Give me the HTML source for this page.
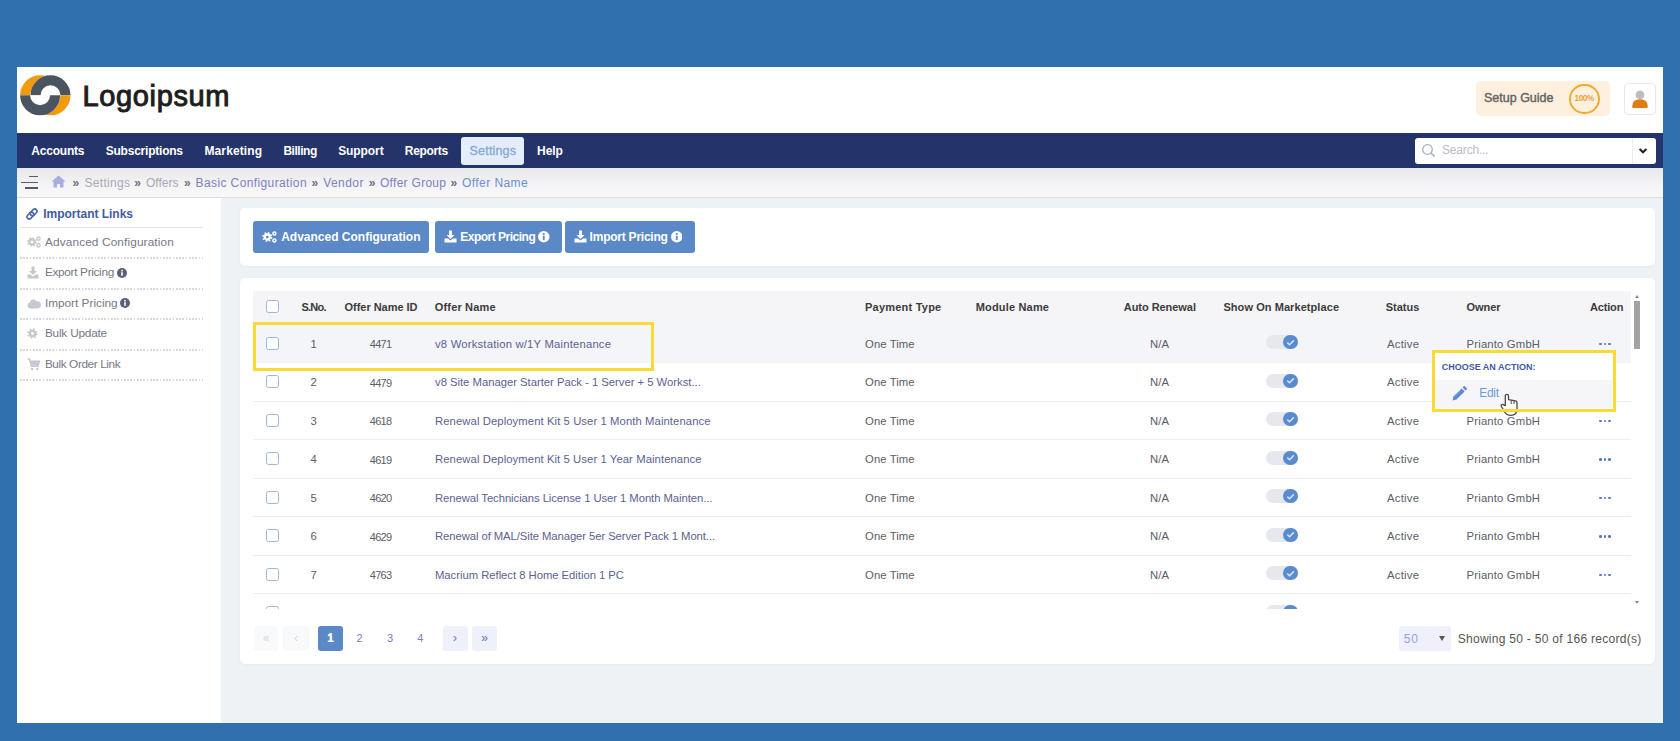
<!DOCTYPE html>
<html><head><meta charset="utf-8">
<style>
*{box-sizing:border-box;margin:0;padding:0}
html,body{width:1680px;height:741px;overflow:hidden;background:#3170ae;font-family:"Liberation Sans",sans-serif}
.a{position:absolute;white-space:nowrap}
.nv{position:absolute;top:133px;height:35px;line-height:35px;color:#fff;font-size:11.8px;font-weight:bold;white-space:nowrap}
.bt{position:absolute;top:213px;height:29px;line-height:29px;font-size:12.7px;white-space:nowrap;color:#a8a9b4}
.sl{position:absolute;left:45px;font-size:11.5px;color:#8a8c98;white-space:nowrap;line-height:14px}
.sd{position:absolute;left:20px;width:183px;height:2px;background:repeating-linear-gradient(90deg,#d9dadf 0 1.6px,transparent 1.6px 3.25px)}
.btn{position:absolute;top:221px;height:32px;background:#5b88c6;border-radius:3px;color:#fff;font-size:12px;font-weight:bold;line-height:32px;white-space:nowrap}
.th{position:absolute;top:300px;line-height:14px;font-size:11px;font-weight:bold;color:#3b3b3b;white-space:nowrap}
.cb{position:absolute;width:13px;height:13px;border:1.5px solid #9db5e0;border-radius:2.5px;background:#fff}
.td{position:absolute;font-size:11.4px;color:#585858;line-height:14px;white-space:nowrap}
.c{text-align:center}
.on{color:#5c6290;font-size:11.5px}
.tg{position:absolute;width:32px;height:14px;border-radius:7px;background:#e6e8ee}
.kn{position:absolute;left:17.3px;top:-0.3px;width:14.5px;height:14.5px;border-radius:50%;background:#5a8bd0}
.dots{position:absolute;height:3px;width:14px}
.dots i{position:absolute;top:0.2px;width:2.7px;height:2.7px;border-radius:50%;background:#5778c8}
.dots i:nth-child(1){left:0px}.dots i:nth-child(2){left:4.6px}.dots i:nth-child(3){left:9.2px}
.pg{position:absolute;top:626px;width:25px;height:25px;border-radius:3px;text-align:center;line-height:25px;font-size:12px;color:#7a80c0}
.t{position:absolute;white-space:nowrap;line-height:1;font-family:"Liberation Sans",sans-serif}
.ck{position:absolute;left:17px;top:-0.5px}

</style></head><body>
<!-- app panel -->
<div class="a" style="left:17px;top:67px;width:1646px;height:656px;background:#eff2f5"></div>
<!-- header -->
<div class="a" style="left:17px;top:67px;width:1646px;height:66px;background:#fff"></div>
<svg class="a" style="left:17px;top:67px" width="60" height="55" viewBox="0 0 60 55">
  <path d="M8.1 28.3 A15 15 0 0 1 38.1 28.3" stroke="#f29a0e" stroke-width="10" fill="none"/>
  <path d="M13.5 28.3 A20 20 0 0 1 53.5 28.3 Z" fill="#fff"/>
  <path d="M18.5 28.3 A15 15 0 0 1 48.5 28.3" stroke="#4a5561" stroke-width="10" fill="none"/>
  <path d="M18.5 28.3 A15 15 0 0 0 48.5 28.3" stroke="#f29a0e" stroke-width="10" fill="none"/>
  <path d="M3.1 28.3 A20 20 0 0 0 43.1 28.3 Z" fill="#fff"/>
  <path d="M8.1 28.3 A15 15 0 0 0 38.1 28.3" stroke="#4a5561" stroke-width="10" fill="none"/>
</svg>
<div class="a" style="left:1476px;top:81px;width:134px;height:35px;background:#fdf0de;border-radius:5px"></div>
<div class="a" style="left:1569px;top:83.5px;width:30.5px;height:30.5px;border:2.6px solid #f1ab2e;border-radius:50%;font-size:8.3px;font-weight:bold;color:#e9a444;text-align:center;line-height:25.5px;letter-spacing:-0.4px">100%</div>
<div class="a" style="left:1624px;top:83px;width:32px;height:32px;border:1px solid #e8e8ea;border-radius:4px;background:#fff"></div>
<svg class="a" style="left:1624px;top:83px" width="32" height="32" viewBox="0 0 32 32">
  <path d="M8.2 23.5 Q8.2 16.2 16 16.2 Q23.8 16.2 23.8 23.5 Q23.8 25 22.3 25 L9.7 25 Q8.2 25 8.2 23.5 Z" fill="#e07c12"/>
  <circle cx="16" cy="12" r="4.4" fill="#bdbdbd"/>
</svg>
<!-- nav -->
<div class="a" style="left:17px;top:133px;width:1646px;height:35px;background:#24336a"></div>
<div class="a" style="left:461px;top:137px;width:63px;height:28px;background:#e4eefa;border-radius:3px"></div>
<div class="a" style="left:1415px;top:138px;width:241px;height:25.5px;background:#fff;border-radius:3px"></div>
<div class="a" style="left:1631.5px;top:138px;width:1px;height:25.5px;background:#ededed"></div>
<svg class="a" style="left:1421px;top:143px" width="16" height="16" viewBox="0 0 16 16">
  <circle cx="6.5" cy="6.5" r="4.8" stroke="#a9b0c6" stroke-width="1.3" fill="none"/>
  <path d="M10 10 L13.6 13.6" stroke="#a9b0c6" stroke-width="1.5"/>
</svg>
<svg class="a" style="left:1637px;top:146px" width="12" height="10" viewBox="0 0 12 10">
  <path d="M2.6 3 L6 6.2 L9.4 3" stroke="#222" stroke-width="2.1" fill="none"/>
</svg>
<!-- breadcrumb -->
<div class="a" style="left:17px;top:168px;width:1646px;height:30px;background:linear-gradient(#e8e8eb,#f3f3f5 55%,#f9f9fa);border-bottom:1.5px solid #dcdde1"></div>
<div class="a" style="left:28.5px;top:175.6px;width:9.5px;height:1.8px;background:#5c5c5c"></div>
<div class="a" style="left:20.5px;top:181.6px;width:17.5px;height:1.8px;background:#5c5c5c"></div>
<div class="a" style="left:25px;top:187.1px;width:13px;height:1.8px;background:#5c5c5c"></div>
<svg class="a" style="left:51px;top:175px" width="15" height="13" viewBox="0 0 15 13">
  <path d="M7.5 0.5 L0.5 6.5 L2.5 6.5 L2.5 12.5 L6 12.5 L6 9 L9 9 L9 12.5 L12.5 12.5 L12.5 6.5 L14.5 6.5 Z" fill="#a6addf"/>
</svg>
<!-- sidebar -->
<div class="a" style="left:17px;top:198px;width:204px;height:525px;background:#fff"></div>
<svg class="a" style="left:25px;top:207px" width="14" height="14" viewBox="0 0 14 14">
  <g transform="rotate(-45 7 7)" fill="none" stroke="#4a66b3" stroke-width="1.6">
   <rect x="0.9" y="4.8" width="7.6" height="4.4" rx="2.2"/>
   <rect x="5.5" y="4.8" width="7.6" height="4.4" rx="2.2"/>
  </g>
</svg>
<div class="a" style="left:20px;top:226.5px;width:183px;height:1px;background:#e4e5ea"></div>
<div class="sd" style="top:257px"></div>
<div class="sd" style="top:287.5px"></div>
<div class="sd" style="top:318px"></div>
<div class="sd" style="top:348.5px"></div>
<div class="sd" style="top:379px"></div>
<!-- toolbar card -->
<div class="a" style="left:240px;top:208px;width:1415px;height:58px;background:#fff;border-radius:5px;box-shadow:0 1px 3px rgba(60,70,90,0.05)"></div>
<div class="btn" style="left:253px;width:176px"></div>
<div class="btn" style="left:435px;width:127px"></div>
<div class="btn" style="left:565px;width:130px"></div>

<!-- sidebar icons -->
<svg class="a" style="left:27px;top:236px" width="15" height="12" viewBox="0 0 15 12">
  <g fill="none" stroke="#c6c8d1">
   <circle cx="5" cy="6" r="2.6" stroke-width="2.2"/>
   <circle cx="5" cy="6" r="4" stroke-width="1.6" stroke-dasharray="1.6 1.54"/>
   <circle cx="11.5" cy="2.6" r="1.6" stroke-width="1.4"/>
   <circle cx="11.5" cy="9.4" r="1.6" stroke-width="1.4"/>
  </g>
</svg>
<svg class="a" style="left:27px;top:266px" width="12" height="13" viewBox="0 0 12 13">
  <path d="M4.5 0.5 H7.5 V5 H10 L6 9 L2 5 H4.5 Z" fill="#c6c8d1"/>
  <path d="M0.5 8.5 H3.5 L6 10.5 L8.5 8.5 H11.5 V12.5 H0.5 Z" fill="#c6c8d1"/>
</svg>
<svg class="a" style="left:27px;top:298px" width="14" height="11" viewBox="0 0 14 11">
  <path d="M3.2 10.5 A3 3 0 0 1 2.8 4.6 A3.6 3.6 0 0 1 9.6 3.4 A3.2 3.2 0 0 1 10.8 10.5 Z" fill="#c6c8d1"/>
</svg>
<svg class="a" style="left:27px;top:328px" width="12" height="12" viewBox="0 0 12 12">
  <g fill="none" stroke="#c6c8d1">
   <circle cx="5.5" cy="5.5" r="2.6" stroke-width="2.4"/>
   <circle cx="5.5" cy="5.5" r="4.3" stroke-width="1.8" stroke-dasharray="1.7 1.68"/>
  </g>
</svg>
<svg class="a" style="left:27px;top:358px" width="13" height="13" viewBox="0 0 13 13">
  <path d="M0.5 1.2 H2.6 L4.4 8.2 H11 L12.2 3.2 H3.3" fill="none" stroke="#c6c8d1" stroke-width="1.6"/>
  <path d="M3.6 3.2 H12 L11 7.6 H4.6 Z" fill="#c6c8d1"/>
  <circle cx="5.2" cy="11" r="1.2" fill="#c6c8d1"/><circle cx="10.2" cy="11" r="1.2" fill="#c6c8d1"/>
</svg>
<svg class="a" style="left:117px;top:267.5px" width="10" height="10" viewBox="0 0 10 10"><circle cx="5" cy="5" r="5" fill="#5b6079"/><rect x="4.2" y="4.2" width="1.6" height="3.6" fill="#fff"/><circle cx="5" cy="2.7" r="0.9" fill="#fff"/></svg>
<svg class="a" style="left:120px;top:298px" width="10" height="10" viewBox="0 0 10 10"><circle cx="5" cy="5" r="5" fill="#5b6079"/><rect x="4.2" y="4.2" width="1.6" height="3.6" fill="#fff"/><circle cx="5" cy="2.7" r="0.9" fill="#fff"/></svg>
<!-- button icons -->
<svg class="a" style="left:262px;top:231px" width="16" height="12" viewBox="0 0 16 12">
  <g fill="none" stroke="#fff">
   <circle cx="5.3" cy="6" r="2.5" stroke-width="2.3"/>
   <circle cx="5.3" cy="6" r="4.1" stroke-width="1.8" stroke-dasharray="1.6 1.62"/>
   <circle cx="12.4" cy="2.4" r="1.5" stroke-width="1.5"/>
   <circle cx="12.4" cy="9.6" r="1.5" stroke-width="1.5"/>
  </g>
</svg>
<svg class="a" style="left:444px;top:230px" width="13" height="13" viewBox="0 0 13 13">
  <path d="M5 0.5 H8 V5 H10.5 L6.5 9 L2.5 5 H5 Z" fill="#fff"/>
  <path d="M0.5 8.5 H4 L6.5 10.5 L9 8.5 H12.5 V12.5 H0.5 Z" fill="#fff"/>
</svg>
<svg class="a" style="left:573.5px;top:230px" width="13" height="13" viewBox="0 0 13 13">
  <path d="M5 0.5 H8 V5 H10.5 L6.5 9 L2.5 5 H5 Z" fill="#fff"/>
  <path d="M0.5 8.5 H4 L6.5 10.5 L9 8.5 H12.5 V12.5 H0.5 Z" fill="#fff"/>
</svg>
<svg class="a" style="left:538px;top:231px" width="11.5" height="11.5" viewBox="0 0 10 10"><circle cx="5" cy="5" r="5" fill="#fff"/><rect x="4.2" y="4.2" width="1.6" height="3.6" fill="#5b88c6"/><circle cx="5" cy="2.7" r="0.9" fill="#5b88c6"/></svg>
<svg class="a" style="left:670.5px;top:231px" width="11.5" height="11.5" viewBox="0 0 10 10"><circle cx="5" cy="5" r="5" fill="#fff"/><rect x="4.2" y="4.2" width="1.6" height="3.6" fill="#5b88c6"/><circle cx="5" cy="2.7" r="0.9" fill="#5b88c6"/></svg>
<!-- table card -->
<div class="a" style="left:240px;top:278px;width:1415px;height:386px;background:#fff;border-radius:5px;box-shadow:0 1px 3px rgba(60,70,90,0.05)"></div>
<div class="a" style="left:253px;top:291px;width:1378px;height:33px;background:#f5f5f7"></div>
<div class="cb" style="left:266px;top:300px"></div>
<div class="a" style="left:253px;top:324px;width:1378px;height:285px;overflow:hidden">
<div class="a" style="left:-253px;top:-324px;width:1680px;height:741px">
<div class="a" style="left:253px;top:324.0px;width:1379px;height:38.5px;background:#f3f5f9"></div>
<div class="cb" style="left:266px;top:336.8px"></div>
<div class="tg" style="left:1266px;top:335.2px"><div class="kn"></div><svg class="ck" width="15" height="15" viewBox="0 0 15 15"><path d="M4.3 7.6 L6.5 9.7 L10.8 5.4" stroke="#d6e4f7" stroke-width="1.5" fill="none"/></svg></div>
<div class="dots" style="left:1599px;top:342.6px"><i></i><i></i><i></i></div>
<div class="cb" style="left:266px;top:375.2px"></div>
<div class="tg" style="left:1266px;top:373.8px"><div class="kn"></div><svg class="ck" width="15" height="15" viewBox="0 0 15 15"><path d="M4.3 7.6 L6.5 9.7 L10.8 5.4" stroke="#d6e4f7" stroke-width="1.5" fill="none"/></svg></div>
<div class="dots" style="left:1599px;top:381.1px"><i></i><i></i><i></i></div>
<div class="a" style="left:253px;top:400.5px;width:1379px;height:1px;background:#eeeef2"></div>
<div class="cb" style="left:266px;top:413.8px"></div>
<div class="tg" style="left:1266px;top:412.2px"><div class="kn"></div><svg class="ck" width="15" height="15" viewBox="0 0 15 15"><path d="M4.3 7.6 L6.5 9.7 L10.8 5.4" stroke="#d6e4f7" stroke-width="1.5" fill="none"/></svg></div>
<div class="dots" style="left:1599px;top:419.6px"><i></i><i></i><i></i></div>
<div class="a" style="left:253px;top:439.0px;width:1379px;height:1px;background:#eeeef2"></div>
<div class="cb" style="left:266px;top:452.2px"></div>
<div class="tg" style="left:1266px;top:450.8px"><div class="kn"></div><svg class="ck" width="15" height="15" viewBox="0 0 15 15"><path d="M4.3 7.6 L6.5 9.7 L10.8 5.4" stroke="#d6e4f7" stroke-width="1.5" fill="none"/></svg></div>
<div class="dots" style="left:1599px;top:458.1px"><i></i><i></i><i></i></div>
<div class="a" style="left:253px;top:477.5px;width:1379px;height:1px;background:#eeeef2"></div>
<div class="cb" style="left:266px;top:490.8px"></div>
<div class="tg" style="left:1266px;top:489.2px"><div class="kn"></div><svg class="ck" width="15" height="15" viewBox="0 0 15 15"><path d="M4.3 7.6 L6.5 9.7 L10.8 5.4" stroke="#d6e4f7" stroke-width="1.5" fill="none"/></svg></div>
<div class="dots" style="left:1599px;top:496.6px"><i></i><i></i><i></i></div>
<div class="a" style="left:253px;top:516.0px;width:1379px;height:1px;background:#eeeef2"></div>
<div class="cb" style="left:266px;top:529.2px"></div>
<div class="tg" style="left:1266px;top:527.8px"><div class="kn"></div><svg class="ck" width="15" height="15" viewBox="0 0 15 15"><path d="M4.3 7.6 L6.5 9.7 L10.8 5.4" stroke="#d6e4f7" stroke-width="1.5" fill="none"/></svg></div>
<div class="dots" style="left:1599px;top:535.0px"><i></i><i></i><i></i></div>
<div class="a" style="left:253px;top:554.5px;width:1379px;height:1px;background:#eeeef2"></div>
<div class="cb" style="left:266px;top:567.8px"></div>
<div class="tg" style="left:1266px;top:566.2px"><div class="kn"></div><svg class="ck" width="15" height="15" viewBox="0 0 15 15"><path d="M4.3 7.6 L6.5 9.7 L10.8 5.4" stroke="#d6e4f7" stroke-width="1.5" fill="none"/></svg></div>
<div class="dots" style="left:1599px;top:573.5px"><i></i><i></i><i></i></div>
<div class="a" style="left:253px;top:593.0px;width:1379px;height:1px;background:#eeeef2"></div>
<div class="cb" style="left:266px;top:606.2px"></div>
<div class="tg" style="left:1266px;top:604.8px"><div class="kn"></div><svg class="ck" width="15" height="15" viewBox="0 0 15 15"><path d="M4.3 7.6 L6.5 9.7 L10.8 5.4" stroke="#d6e4f7" stroke-width="1.5" fill="none"/></svg></div>
<div class="dots" style="left:1599px;top:612.0px"><i></i><i></i><i></i></div>
<div class="t" style="left:310.45px;top:338.95px;font-size:11.30px;color:#5c5d66">1</div>
<div class="t" style="left:369.85px;top:339.20px;font-size:11.00px;color:#5c5d66;letter-spacing:-0.728px">4471</div>
<div class="t" style="left:435.00px;top:338.95px;font-size:11.30px;color:#5c6290;letter-spacing:0.187px">v8 Workstation w/1Y Maintenance</div>
<div class="t" style="left:865.00px;top:338.95px;font-size:11.30px;color:#5c5d66;letter-spacing:0.088px">One Time</div>
<div class="t" style="left:1150.00px;top:338.95px;font-size:11.30px;color:#5c5d66;letter-spacing:0.078px">N/A</div>
<div class="t" style="left:1386.90px;top:338.95px;font-size:11.30px;color:#5c5d66;letter-spacing:0.287px">Active</div>
<div class="t" style="left:1466.60px;top:338.95px;font-size:11.30px;color:#5c5d66;letter-spacing:0.166px">Prianto GmbH</div>
<div class="t" style="left:310.45px;top:377.45px;font-size:11.30px;color:#5c5d66">2</div>
<div class="t" style="left:369.85px;top:377.70px;font-size:11.00px;color:#5c5d66;letter-spacing:-0.728px">4479</div>
<div class="t" style="left:435.00px;top:377.45px;font-size:11.30px;color:#5c6290;letter-spacing:-0.022px">v8 Site Manager Starter Pack - 1 Server + 5 Workst...</div>
<div class="t" style="left:865.00px;top:377.45px;font-size:11.30px;color:#5c5d66;letter-spacing:0.088px">One Time</div>
<div class="t" style="left:1150.00px;top:377.45px;font-size:11.30px;color:#5c5d66;letter-spacing:0.078px">N/A</div>
<div class="t" style="left:1386.90px;top:377.45px;font-size:11.30px;color:#5c5d66;letter-spacing:0.287px">Active</div>
<div class="t" style="left:1466.60px;top:377.45px;font-size:11.30px;color:#5c5d66;letter-spacing:0.166px">Prianto GmbH</div>
<div class="t" style="left:310.45px;top:415.95px;font-size:11.30px;color:#5c5d66">3</div>
<div class="t" style="left:369.85px;top:416.20px;font-size:11.00px;color:#5c5d66;letter-spacing:-0.728px">4618</div>
<div class="t" style="left:435.00px;top:415.95px;font-size:11.30px;color:#5c6290;letter-spacing:0.075px">Renewal Deployment Kit 5 User 1 Month Maintenance</div>
<div class="t" style="left:865.00px;top:415.95px;font-size:11.30px;color:#5c5d66;letter-spacing:0.088px">One Time</div>
<div class="t" style="left:1150.00px;top:415.95px;font-size:11.30px;color:#5c5d66;letter-spacing:0.078px">N/A</div>
<div class="t" style="left:1386.90px;top:415.95px;font-size:11.30px;color:#5c5d66;letter-spacing:0.287px">Active</div>
<div class="t" style="left:1466.60px;top:415.95px;font-size:11.30px;color:#5c5d66;letter-spacing:0.166px">Prianto GmbH</div>
<div class="t" style="left:310.45px;top:454.45px;font-size:11.30px;color:#5c5d66">4</div>
<div class="t" style="left:369.85px;top:454.70px;font-size:11.00px;color:#5c5d66;letter-spacing:-0.728px">4619</div>
<div class="t" style="left:435.00px;top:454.45px;font-size:11.30px;color:#5c6290;letter-spacing:0.074px">Renewal Deployment Kit 5 User 1 Year Maintenance</div>
<div class="t" style="left:865.00px;top:454.45px;font-size:11.30px;color:#5c5d66;letter-spacing:0.088px">One Time</div>
<div class="t" style="left:1150.00px;top:454.45px;font-size:11.30px;color:#5c5d66;letter-spacing:0.078px">N/A</div>
<div class="t" style="left:1386.90px;top:454.45px;font-size:11.30px;color:#5c5d66;letter-spacing:0.287px">Active</div>
<div class="t" style="left:1466.60px;top:454.45px;font-size:11.30px;color:#5c5d66;letter-spacing:0.166px">Prianto GmbH</div>
<div class="t" style="left:310.45px;top:492.95px;font-size:11.30px;color:#5c5d66">5</div>
<div class="t" style="left:369.85px;top:493.20px;font-size:11.00px;color:#5c5d66;letter-spacing:-0.728px">4620</div>
<div class="t" style="left:435.00px;top:492.95px;font-size:11.30px;color:#5c6290;letter-spacing:-0.071px">Renewal Technicians License 1 User 1 Month Mainten...</div>
<div class="t" style="left:865.00px;top:492.95px;font-size:11.30px;color:#5c5d66;letter-spacing:0.088px">One Time</div>
<div class="t" style="left:1150.00px;top:492.95px;font-size:11.30px;color:#5c5d66;letter-spacing:0.078px">N/A</div>
<div class="t" style="left:1386.90px;top:492.95px;font-size:11.30px;color:#5c5d66;letter-spacing:0.287px">Active</div>
<div class="t" style="left:1466.60px;top:492.95px;font-size:11.30px;color:#5c5d66;letter-spacing:0.166px">Prianto GmbH</div>
<div class="t" style="left:310.45px;top:531.45px;font-size:11.30px;color:#5c5d66">6</div>
<div class="t" style="left:369.85px;top:531.71px;font-size:11.00px;color:#5c5d66;letter-spacing:-0.728px">4629</div>
<div class="t" style="left:435.00px;top:531.45px;font-size:11.30px;color:#5c6290;letter-spacing:-0.083px">Renewal of MAL/Site Manager 5er Server Pack 1 Mont...</div>
<div class="t" style="left:865.00px;top:531.45px;font-size:11.30px;color:#5c5d66;letter-spacing:0.088px">One Time</div>
<div class="t" style="left:1150.00px;top:531.45px;font-size:11.30px;color:#5c5d66;letter-spacing:0.078px">N/A</div>
<div class="t" style="left:1386.90px;top:531.45px;font-size:11.30px;color:#5c5d66;letter-spacing:0.287px">Active</div>
<div class="t" style="left:1466.60px;top:531.45px;font-size:11.30px;color:#5c5d66;letter-spacing:0.166px">Prianto GmbH</div>
<div class="t" style="left:310.45px;top:569.95px;font-size:11.30px;color:#5c5d66">7</div>
<div class="t" style="left:369.85px;top:570.21px;font-size:11.00px;color:#5c5d66;letter-spacing:-0.728px">4763</div>
<div class="t" style="left:435.00px;top:569.95px;font-size:11.30px;color:#5c6290;letter-spacing:-0.036px">Macrium Reflect 8 Home Edition 1 PC</div>
<div class="t" style="left:865.00px;top:569.95px;font-size:11.30px;color:#5c5d66;letter-spacing:0.088px">One Time</div>
<div class="t" style="left:1150.00px;top:569.95px;font-size:11.30px;color:#5c5d66;letter-spacing:0.078px">N/A</div>
<div class="t" style="left:1386.90px;top:569.95px;font-size:11.30px;color:#5c5d66;letter-spacing:0.287px">Active</div>
<div class="t" style="left:1466.60px;top:569.95px;font-size:11.30px;color:#5c5d66;letter-spacing:0.166px">Prianto GmbH</div>
<div class="t" style="left:310.45px;top:608.45px;font-size:11.30px;color:#5c5d66">8</div>
<div class="t" style="left:369.85px;top:608.71px;font-size:11.00px;color:#5c5d66;letter-spacing:-0.728px">4764</div>
<div class="t" style="left:435.00px;top:608.45px;font-size:11.30px;color:#5c6290;letter-spacing:-0.036px">Macrium Reflect 8 Home Edition 3 PC</div>
<div class="t" style="left:865.00px;top:608.45px;font-size:11.30px;color:#5c5d66;letter-spacing:0.088px">One Time</div>
<div class="t" style="left:1150.00px;top:608.45px;font-size:11.30px;color:#5c5d66;letter-spacing:0.078px">N/A</div>
<div class="t" style="left:1386.90px;top:608.45px;font-size:11.30px;color:#5c5d66;letter-spacing:0.287px">Active</div>
<div class="t" style="left:1466.60px;top:608.45px;font-size:11.30px;color:#5c5d66;letter-spacing:0.166px">Prianto GmbH</div>
</div></div>
<!-- scrollbar -->
<div class="a" style="left:1634px;top:300.5px;width:6px;height:48px;background:#a3a3a3"></div>
<div class="a" style="left:1634.5px;top:294.5px;width:0;height:0;border-left:2.5px solid transparent;border-right:2.5px solid transparent;border-bottom:3px solid #8a8a8a"></div>
<div class="a" style="left:1634.5px;top:601px;width:0;height:0;border-left:2.5px solid transparent;border-right:2.5px solid transparent;border-top:3px solid #8a8a8a"></div>
<!-- pagination -->
<div class="pg" style="left:254px;width:24px;background:#f8f9fb;color:#d4d6e6">&laquo;</div>
<div class="pg" style="left:283px;width:26px;background:#f8f9fb;color:#d4d6e6">&lsaquo;</div>
<div class="pg" style="left:318px;background:#5b89c8;color:#fff;font-weight:bold">1</div>
<div class="pg" style="left:442.5px;background:#eef0fa;color:#6a70b8">&rsaquo;</div>
<div class="pg" style="left:472px;background:#eef0fa;color:#6a70b8">&raquo;</div>
<div class="a" style="left:1399px;top:626px;width:52px;height:25px;background:#f0f0fa;border-radius:3px"></div>
<div class="a" style="left:1439px;top:635.5px;width:0;height:0;border-left:3.5px solid transparent;border-right:3.5px solid transparent;border-top:5px solid #555"></div>
<!-- popup -->
<div class="a" style="left:1432px;top:350px;width:183px;height:61px;background:#fff"></div>
<div class="a" style="left:1435px;top:379.5px;width:177px;height:28.5px;background:#f6f6f8"></div>
<svg class="a" style="left:1451px;top:386px" width="17" height="16" viewBox="0 0 17 16">
  <path d="M1.6 14.4 L2.4 10.6 L10.6 2.4 L13.6 5.4 L5.4 13.6 Z" fill="#5a8ad5"/>
  <path d="M11.5 1.5 L12.6 0.4 A1 1 0 0 1 14 0.4 L15.6 2 A1 1 0 0 1 15.6 3.4 L14.5 4.5 Z" fill="#5a8ad5"/>
  <path d="M3.2 11 L9.6 4.6" stroke="#8fb0e6" stroke-width="0.7"/>
</svg>
<div class="t" style="left:82.50px;top:81.80px;font-size:29.00px;color:#1e1e1e;letter-spacing:0.641px;-webkit-text-stroke:1px #1e1e1e">Logoipsum</div>
<div class="t" style="left:1484.00px;top:91.74px;font-size:12.50px;color:#636363;-webkit-text-stroke:0.4px #636363">Setup Guide</div>
<div class="t" style="left:31.30px;top:145.26px;font-size:12.00px;color:#ffffff;letter-spacing:-0.212px;font-weight:bold">Accounts</div>
<div class="t" style="left:105.75px;top:145.26px;font-size:12.00px;color:#ffffff;letter-spacing:-0.230px;font-weight:bold">Subscriptions</div>
<div class="t" style="left:204.50px;top:145.26px;font-size:12.00px;color:#ffffff;letter-spacing:0.102px;font-weight:bold">Marketing</div>
<div class="t" style="left:283.40px;top:145.26px;font-size:12.00px;color:#ffffff;letter-spacing:-0.462px;font-weight:bold">Billing</div>
<div class="t" style="left:338.20px;top:145.26px;font-size:12.00px;color:#ffffff;letter-spacing:-0.083px;font-weight:bold">Support</div>
<div class="t" style="left:404.80px;top:145.26px;font-size:12.00px;color:#ffffff;letter-spacing:-0.324px;font-weight:bold">Reports</div>
<div class="t" style="left:537.00px;top:145.26px;font-size:12.00px;color:#ffffff;letter-spacing:-0.039px;font-weight:bold">Help</div>
<div class="t" style="left:469.60px;top:144.84px;font-size:12.50px;color:#86a6da;letter-spacing:0.175px;-webkit-text-stroke:0.3px #86a6da">Settings</div>
<div class="t" style="left:1442.00px;top:144.36px;font-size:12.00px;color:#b9bcc8;letter-spacing:-0.179px">Search...</div>
<div class="t" style="left:72.40px;top:176.61px;font-size:12.00px;color:#6e6e78;font-weight:bold">»</div>
<div class="t" style="left:84.50px;top:176.61px;font-size:12.00px;color:#a8a9b4;letter-spacing:0.292px">Settings</div>
<div class="t" style="left:134.30px;top:176.61px;font-size:12.00px;color:#6e6e78;font-weight:bold">»</div>
<div class="t" style="left:146.00px;top:176.61px;font-size:12.00px;color:#a8a9b4;letter-spacing:0.026px">Offers</div>
<div class="t" style="left:184.00px;top:176.61px;font-size:12.00px;color:#6e6e78;font-weight:bold">»</div>
<div class="t" style="left:195.60px;top:176.61px;font-size:12.00px;color:#7e7fc2;letter-spacing:0.385px">Basic Configuration</div>
<div class="t" style="left:311.60px;top:176.61px;font-size:12.00px;color:#6e6e78;font-weight:bold">»</div>
<div class="t" style="left:323.20px;top:176.61px;font-size:12.00px;color:#7e7fc2;letter-spacing:0.431px">Vendor</div>
<div class="t" style="left:368.75px;top:176.61px;font-size:12.00px;color:#6e6e78;font-weight:bold">»</div>
<div class="t" style="left:380.00px;top:176.61px;font-size:12.00px;color:#7e7fc2;letter-spacing:0.286px">Offer Group</div>
<div class="t" style="left:450.50px;top:176.61px;font-size:12.00px;color:#6e6e78;font-weight:bold">»</div>
<div class="t" style="left:462.00px;top:176.61px;font-size:12.00px;color:#6b8ed6;letter-spacing:0.432px">Offer Name</div>
<div class="t" style="left:43.30px;top:208.46px;font-size:12.00px;color:#435aa2;letter-spacing:-0.023px;font-weight:bold">Important Links</div>
<div class="t" style="left:45.00px;top:236.63px;font-size:11.80px;color:#767884;letter-spacing:0.137px">Advanced Configuration</div>
<div class="t" style="left:45.00px;top:267.13px;font-size:11.80px;color:#767884;letter-spacing:-0.326px">Export Pricing</div>
<div class="t" style="left:44.90px;top:297.63px;font-size:11.80px;color:#767884">Import Pricing</div>
<div class="t" style="left:44.90px;top:328.33px;font-size:11.80px;color:#767884;letter-spacing:-0.198px">Bulk Update</div>
<div class="t" style="left:44.90px;top:358.83px;font-size:11.80px;color:#767884;letter-spacing:-0.401px">Bulk Order Link</div>
<div class="t" style="left:281.20px;top:231.26px;font-size:12.00px;color:#fff;font-weight:bold">Advanced Configuration</div>
<div class="t" style="left:460.20px;top:231.26px;font-size:12.00px;color:#fff;letter-spacing:-0.494px;font-weight:bold">Export Pricing</div>
<div class="t" style="left:589.60px;top:231.26px;font-size:12.00px;color:#fff;letter-spacing:-0.234px;font-weight:bold">Import Pricing</div>
<div class="t" style="left:301.40px;top:301.50px;font-size:11.00px;color:#3b3b3b;letter-spacing:-0.706px;font-weight:bold">S.No.</div>
<div class="t" style="left:344.60px;top:301.50px;font-size:11.00px;color:#3b3b3b;letter-spacing:-0.038px;font-weight:bold">Offer Name ID</div>
<div class="t" style="left:434.80px;top:301.50px;font-size:11.00px;color:#3b3b3b;letter-spacing:0.156px;font-weight:bold">Offer Name</div>
<div class="t" style="left:865.00px;top:301.50px;font-size:11.00px;color:#3b3b3b;letter-spacing:0.220px;font-weight:bold">Payment Type</div>
<div class="t" style="left:975.70px;top:301.50px;font-size:11.00px;color:#3b3b3b;letter-spacing:0.178px;font-weight:bold">Module Name</div>
<div class="t" style="left:1123.80px;top:301.50px;font-size:11.00px;color:#3b3b3b;letter-spacing:-0.049px;font-weight:bold">Auto Renewal</div>
<div class="t" style="left:1223.40px;top:301.50px;font-size:11.00px;color:#3b3b3b;letter-spacing:0.072px;font-weight:bold">Show On Marketplace</div>
<div class="t" style="left:1385.70px;top:301.50px;font-size:11.00px;color:#3b3b3b;letter-spacing:0.015px;font-weight:bold">Status</div>
<div class="t" style="left:1466.60px;top:301.50px;font-size:11.00px;color:#3b3b3b;letter-spacing:-0.059px;font-weight:bold">Owner</div>
<div class="t" style="left:1590.00px;top:301.50px;font-size:11.00px;color:#3b3b3b;letter-spacing:-0.167px;font-weight:bold">Action</div>
<div class="t" style="left:356.54px;top:632.91px;font-size:11.00px;color:#7a80c0">2</div>
<div class="t" style="left:386.94px;top:632.91px;font-size:11.00px;color:#7a80c0">3</div>
<div class="t" style="left:417.14px;top:632.91px;font-size:11.00px;color:#7a80c0">4</div>
<div class="t" style="left:327.34px;top:632.91px;font-size:11.00px;color:#fff;font-weight:bold">1</div>
<div class="t" style="left:1403.80px;top:632.56px;font-size:12.00px;color:#9aa0dc;letter-spacing:0.841px">50</div>
<div class="t" style="left:1457.70px;top:632.56px;font-size:12.00px;color:#555;letter-spacing:0.285px">Showing 50 - 50 of 166 record(s)</div>
<div class="t" style="left:1441.70px;top:362.79px;font-size:9.00px;color:#3e5ba3;font-weight:bold">CHOOSE AN ACTION:</div>
<div class="t" style="left:1479.20px;top:387.26px;font-size:12.00px;color:#6b98de;letter-spacing:-0.296px">Edit</div>
<svg class="a" style="left:1500px;top:393px" width="19" height="24" viewBox="0 0 19 24">
  <path d="M1.2 13 Q1 11.2 2.8 11.4 L5.3 12.8 L5.3 3 Q5.3 1.3 6.9 1.3 Q8.5 1.3 8.5 3 L8.5 6.6 L15.6 7.9 Q17 8.2 17 9.7 L17 16 Q17 22.3 11 22.3 Q6.6 22.3 4.6 19 Z" fill="#fff" stroke="#4a4a4a" stroke-width="1.3" stroke-linejoin="round"/>
  <path d="M11.2 7.4 V11 M14 7.9 V11" stroke="#4a4a4a" stroke-width="1"/>
</svg>
<div class="a" style="left:1431.5px;top:349.5px;width:184.5px;height:62.5px;border:3.6px solid #fbdb33"></div>
<!-- yellow highlight box -->
<div class="a" style="left:253px;top:322px;width:401px;height:48.5px;border:3.6px solid #fbdb33"></div>

</body></html>
